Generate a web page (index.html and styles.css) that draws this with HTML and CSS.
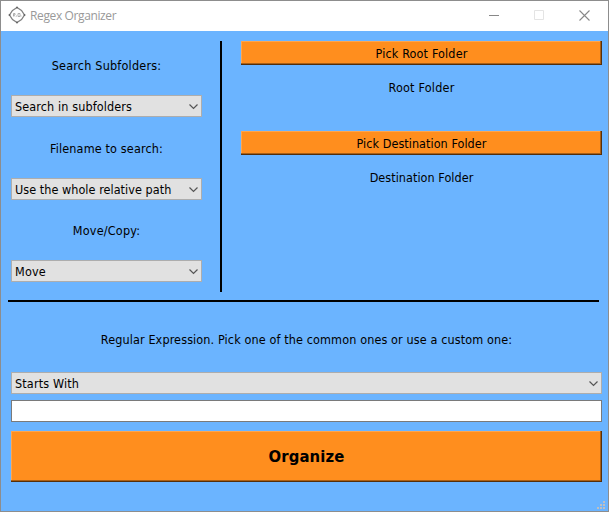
FILE: index.html
```
<!DOCTYPE html>
<html lang="en">
<head>
<meta charset="utf-8">
<title>Regex Organizer</title>
<link rel="stylesheet" href="styles.css">
</head>
<body>
<div class="window">
  <header class="titlebar">
    <svg class="logo" width="18" height="18" viewBox="0 0 18 18"><path d="M4.500 4.500L9 1.500L13.500 4.500L16.500 9L13.500 13.500L9 16.500L4.500 13.500L1.500 9Z" fill="none" stroke="#828282" stroke-width="1.300"/><path d="M8 1.500h2M8 16.500h2M1.500 8v2M16.500 8v2" stroke="#666" stroke-width="1.500"/><path d="M5.500 10.500v-3h1.500v1.500h-1.500l1.500 1.500M8.500 10.500v-1M10 7.500h2v3h-2zM13 10.500v-1" fill="none" stroke="#a0a0a0" stroke-width=".8"/></svg>
    <span class="title">Regex Organizer</span>
    <div class="controls">
      <svg width="10" height="10"><path d="M0 5.500h10" stroke="#888"/></svg>
      <svg width="10" height="10"><path d="M.5.5h9v9h-9z" fill="none" stroke="#e4e4e4"/></svg>
      <svg width="11" height="11"><path d="M.5.5l10 10M10.500.5l-10 10" stroke="#888" stroke-width="1.100"/></svg>
    </div>
  </header>
  <main class="content">
    <div class="top">
      <section class="options">
        <div class="label"><span class="t-subfolders">Search Subfolders:</span></div>
        <div class="combo"><span class="t-in">Search in subfolders</span><svg class="arrow" width="9" height="6"><path d="M.5.5l4 4 4-4"/></svg></div>
        <div class="label"><span class="t-filename">Filename to search:</span></div>
        <div class="combo"><span class="t-path">Use the whole relative path</span><svg class="arrow" width="9" height="6"><path d="M.5.5l4 4 4-4"/></svg></div>
        <div class="label"><span class="t-mc">Move/Copy:</span></div>
        <div class="combo"><span class="t-move">Move</span><svg class="arrow" width="9" height="6"><path d="M.5.5l4 4 4-4"/></svg></div>
      </section>
      <div class="divider"></div>
      <section class="folders">
        <button class="button"><span class="t-pick">Pick Root Folder</span></button>
        <div class="folder"><span class="t-root">Root Folder</span></div>
        <button class="button"><span class="t-pickdest">Pick Destination Folder</span></button>
        <div class="folder"><span class="t-dest">Destination Folder</span></div>
      </section>
    </div>
    <div class="rule"></div>
    <section class="regex">
      <div class="prompt"><span class="t-prompt">Regular Expression. Pick one of the common ones or use a custom one:</span></div>
      <div class="combo"><span class="t-starts">Starts With</span><svg class="arrow" width="9" height="6"><path d="M.5.5l4 4 4-4"/></svg></div>
      <input class="entry" type="text" aria-label="Regular expression">
      <button class="button organize"><span>Organize</span></button>
    </section>
  </main>
  <svg class="grip" width="8" height="8"><path d="M6 0h2v2h-2zM3 3h2v2h-2zM6 3h2v2h-2zM0 6h2v2h-2zM3 6h2v2h-2zM6 6h2v2h-2z" fill="#bfbfbf"/></svg>
</div>
</body>
</html>
```
FILE: styles.css
```
* { box-sizing: border-box; }
body { margin: 0; }
.window {
  position: relative;
  width: 609px;
  height: 512px;
  border: 1px solid #8d8d8d;
  background: #6bb4ff;
  color: #000;
  font: 12.5px/16px "DejaVu Sans Condensed", "DejaVu Sans", sans-serif;
  font-stretch: condensed;
  white-space: nowrap;
  overflow: hidden;
}
.titlebar {
  display: flex;
  align-items: center;
  height: 30px;
  padding: 0 17px 0 7px;
  background: #fff;
}
.logo { margin-right: 4px; margin-bottom: 2px; }
.title {
  font: 12px/16px "Open Sans", sans-serif;
  letter-spacing: -0.38px;
  color: #999;
}
.controls {
  display: flex;
  align-items: center;
  gap: 35px;
  margin-left: auto;
  margin-right: 1px;
  margin-bottom: 2px;
}
.content { padding: 10px 6px 0 7px; }
.top { display: flex; height: 251px; }
.options { width: 191px; margin-left: 3px; }
.label {
  display: flex;
  align-items: center;
  justify-content: center;
  height: 61px;
  padding-top: 2px;
}
.options .label:first-child { height: 54px; padding: 0 0 5px; }
.options .label:nth-child(5) { height: 60px; }
.combo {
  display: flex;
  align-items: center;
  justify-content: space-between;
  height: 22px;
  padding: 1px 3px 0;
  border: 1px solid #adadad;
  background: #e1e1e1;
}
.arrow { fill: none; stroke: #555; stroke-width: 1.2; }
.divider { width: 2px; margin-left: 18px; background: #000; }
.folders { width: 361px; margin-left: 19px; }
.button {
  display: flex;
  align-items: center;
  justify-content: center;
  width: 100%;
  height: 24px;
  margin: 0;
  padding: 1px 0 0;
  border: 0;
  background: #ff8e1e;
  box-shadow: inset -1px -1px #552f0a, inset -2px -2px #aa5f14, inset 1px 1px #ffa54b;
  color: #000;
  font: inherit;
}
.folder { height: 66px; padding-top: 15px; text-align: center; }
.rule { width: 591px; height: 2px; margin-top: 8px; background: #000; }
.regex { width: 591px; margin-left: 3px; }
.prompt { height: 70px; padding-top: 30px; text-align: center; }
.entry {
  display: block;
  width: 100%;
  height: 22px;
  margin: 6px 0 9px;
  border: 1px solid #7a7a7a;
  background: #fff;
}
.organize {
  height: 51px;
  font-size: 16.5px;
  font-weight: bold;
  letter-spacing: 0.15px;
}
.grip { position: absolute; right: 3px; bottom: 2px; }

/* Tracking per caption */
.t-subfolders, .t-root { letter-spacing: 0.21px; }
.t-in, .t-prompt { letter-spacing: 0.12px; }
.t-filename, .t-starts, .t-pick { letter-spacing: 0.15px; }
.t-path, .t-pickdest, .t-dest { letter-spacing: 0.05px; }
.t-mc, .t-move { letter-spacing: 0.2px; }
```
